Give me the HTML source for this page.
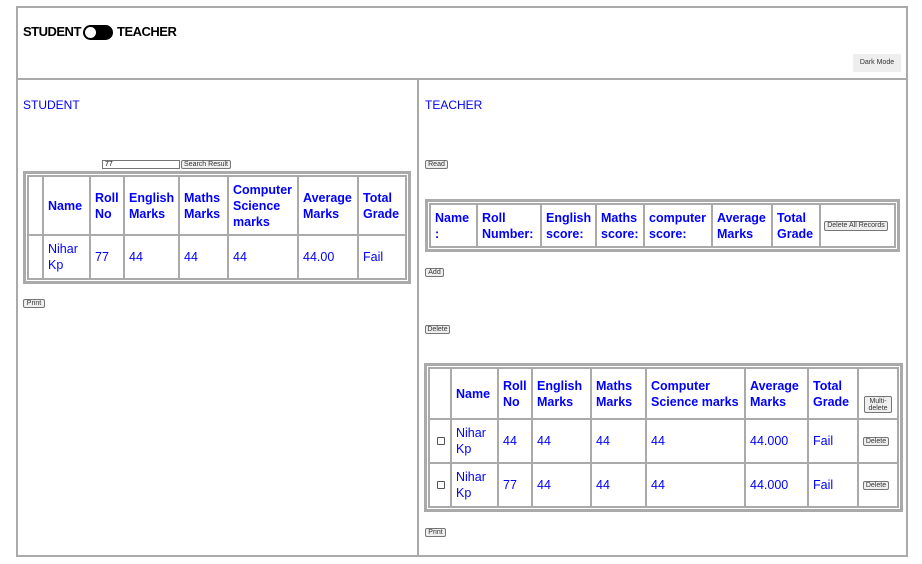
<!DOCTYPE html>
<html><head><meta charset="utf-8"><style>
body{margin:0;width:922px;height:564px;background:#fff;font-family:"Liberation Sans",sans-serif;position:relative;overflow:hidden}
.a{position:absolute}
.box{border:2px solid #aaa}
.btn{position:absolute;background:#efefef;border:1px solid #767676;border-radius:2px;font-size:7px;color:#333;text-align:center;box-sizing:border-box;line-height:7px}
.wrap{position:absolute;border:3px solid #aaa;padding:1px;background:#fff}
table{border-collapse:collapse;table-layout:fixed}
td{border:2px solid #aaa;color:#00f;font-size:12.5px;line-height:16px;padding:0 0 0 4px;vertical-align:middle;overflow:hidden}
th{border:2px solid #aaa;color:#00f;font-size:12.5px;line-height:16px;padding:0 0 0 4px;text-align:left;font-weight:bold;overflow:hidden}
.cb{width:6px;height:6px;border:1px solid #555;border-radius:1px;margin-left:3px}
</style></head><body>
<div class="a box" style="left:16px;top:6px;width:888px;height:547px"></div>
<div class="a" style="left:16px;top:78px;width:892px;height:2px;background:#aaa"></div>
<div class="a" style="left:417px;top:78px;width:2px;height:477px;background:#aaa"></div>
<div class="a" style="left:23px;top:24px;font-size:13px;font-weight:bold;line-height:16px;letter-spacing:-0.5px">STUDENT</div>
<div class="a" style="left:83px;top:25px;width:30px;height:15px;border-radius:8px;background:#000"></div>
<div class="a" style="left:85px;top:27px;width:11px;height:11px;border-radius:6px;background:#fff"></div>
<div class="a" style="left:117px;top:24px;font-size:13px;font-weight:bold;line-height:16px;letter-spacing:-0.5px">TEACHER</div>
<div class="a" style="left:853px;top:54px;width:48px;height:18px;background:#eee;font-size:7px;line-height:18px;text-align:center;color:#333">Dark Mode</div>
<div class="a" style="left:23px;top:98px;font-size:12px;color:#00f">STUDENT</div>
<div class="a" style="left:425px;top:98px;font-size:12px;color:#00f">TEACHER</div>
<div class="a" style="left:102px;top:160px;width:78px;height:9px;border:1px solid #767676;box-sizing:border-box;font-size:7px;line-height:7px;padding-left:2px">77</div>
<div class="btn" style="left:181px;top:160px;width:50px;height:9px">Search Result</div>
<div class="btn" style="left:425px;top:160px;width:23px;height:9px">Read</div>
<div class="btn" style="left:23px;top:299px;width:22px;height:9px">Print</div>
<div class="btn" style="left:425px;top:268px;width:19px;height:9px">Add</div>
<div class="btn" style="left:425px;top:325px;width:25px;height:9px">Delete</div>
<div class="btn" style="left:425px;top:528px;width:21px;height:9px">Print</div>

<div class="wrap" style="left:23px;top:171px">
<table style="width:378px">
<colgroup><col style="width:15px"><col style="width:47px"><col style="width:34px"><col style="width:55px"><col style="width:49px"><col style="width:70px"><col style="width:60px"><col style="width:48px"></colgroup>
<tr style="height:59px"><th></th><th>Name</th><th>Roll No</th><th>English Marks</th><th>Maths Marks</th><th>Computer Science marks</th><th>Average Marks</th><th>Total Grade</th></tr>
<tr style="height:44px"><td></td><td>Nihar Kp</td><td>77</td><td>44</td><td>44</td><td>44</td><td>44.00</td><td>Fail</td></tr>
</table></div>

<div class="wrap" style="left:425px;top:199px">
<table style="width:465px">
<colgroup><col style="width:47px"><col style="width:64px"><col style="width:55px"><col style="width:48px"><col style="width:68px"><col style="width:60px"><col style="width:48px"><col style="width:75px"></colgroup>
<tr style="height:43px"><th>Name :</th><th>Roll Number:</th><th>English score:</th><th>Maths score:</th><th>computer score:</th><th>Average Marks</th><th>Total Grade</th><th style="padding:0 0 0 3px"><div class="btn" style="position:static;width:64px;height:10px;line-height:8px;font-weight:normal">Delete All Records</div></th></tr>
</table></div>

<div class="wrap" style="left:424px;top:363px">
<table style="width:468px">
<colgroup><col style="width:22px"><col style="width:47px"><col style="width:34px"><col style="width:59px"><col style="width:55px"><col style="width:99px"><col style="width:63px"><col style="width:50px"><col style="width:40px"></colgroup>
<tr style="height:51px"><th></th><th>Name</th><th>Roll No</th><th>English Marks</th><th>Maths Marks</th><th>Computer Science marks</th><th>Average Marks</th><th>Total Grade</th><th style="padding:0 0 0 5px;vertical-align:bottom"><div class="btn" style="position:static;width:28px;height:17px;line-height:7px;font-weight:normal;margin-bottom:5px;padding-top:1px">Multi-delete</div></th></tr>
<tr style="height:44px"><td><div class="cb"></div></td><td>Nihar Kp</td><td>44</td><td>44</td><td>44</td><td>44</td><td>44.000</td><td>Fail</td><td><div class="btn" style="position:static;width:26px;height:9px">Delete</div></td></tr>
<tr style="height:44px"><td><div class="cb"></div></td><td>Nihar Kp</td><td>77</td><td>44</td><td>44</td><td>44</td><td>44.000</td><td>Fail</td><td><div class="btn" style="position:static;width:26px;height:9px">Delete</div></td></tr>
</table></div>
</body></html>
